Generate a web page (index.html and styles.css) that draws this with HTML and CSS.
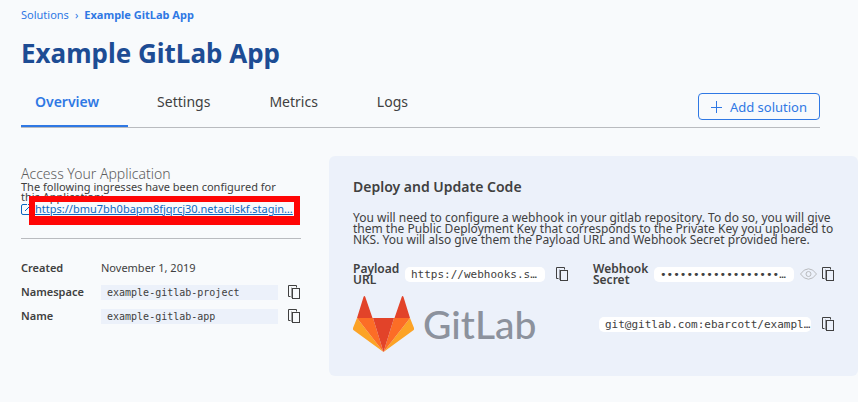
FILE: index.html
```html
<!DOCTYPE html>
<html lang="en">
<head>
<meta charset="utf-8">
<title>Example GitLab App</title>
<link rel="stylesheet" href="styles.css">
</head>
<body>
<svg class="defs" aria-hidden="true">
  <symbol id="copy" viewBox="0 0 12 14">
    <path d="M2.500 11.500H.5V.5h8v2" fill="none" stroke="currentColor"/>
    <path d="M3.500 2.500v10.500" stroke="currentColor" opacity=".5"/>
    <rect x="4.500" y="3.500" width="7" height="10" fill="none" stroke="currentColor"/>
  </symbol>
</svg>
<header class="top">
  <nav class="crumbs" aria-label="Breadcrumb"><a href="#">Solutions</a><span>›</span><a href="#" class="here">Example GitLab App</a></nav>
  <h1>Example GitLab App</h1>
  <div class="bar">
    <nav class="tabs" aria-label="Sections">
      <a href="#" class="active">Overview</a><a href="#">Settings</a><a href="#">Metrics</a><a href="#">Logs</a>
    </nav>
    <button class="add" type="button"><svg width="11" height="12" viewBox="0 0 11 12"><path d="M5.500 0v12M0 6.500h11" stroke="currentColor"/></svg>Add solution</button>
  </div>
</header>
<main class="content">
  <section class="access">
    <div class="ingress">
      <h2>Access Your Application</h2>
      <p>The following ingresses have been configured for this Application:</p>
      <div class="link-row">
        <svg width="12" height="12" viewBox="0 0 12 12" fill="none" stroke="currentColor"><path d="M6 1.500H2Q.5 1.500.5 3v7q0 1.500 1.500 1.500h7M4 8l6-6M7 1.500h4"/></svg>
        <a href="#">https://bmu7bh0bapm8fjqrcj30.netacilskf.stagin…</a>
        <div class="marker"></div>
      </div>
    </div>
    <dl class="facts">
      <dt>Created</dt><dd>November 1, 2019</dd>
      <dt>Namespace</dt><dd><code>example-gitlab-project</code><button type="button" aria-label="Copy namespace"><svg class="copy"><use href="#copy"/></svg></button></dd>
      <dt>Name</dt><dd><code>example-gitlab-app</code><button type="button" aria-label="Copy name"><svg class="copy"><use href="#copy"/></svg></button></dd>
    </dl>
  </section>
  <section class="deploy">
    <h2>Deploy and Update Code</h2>
    <p>You will need to configure a webhook in your gitlab repository. To do so, you will give them the Public Deployment Key that corresponds to the Private Key you uploaded to NKS. You will also give them the Payload URL and Webhook Secret provided here.</p>
    <div class="hooks">
      <div class="hook">
        <strong>Payload URL</strong><code>https://webhooks.s…</code>
        <button type="button" class="lone" aria-label="Copy payload URL"><svg class="copy"><use href="#copy"/></svg></button>
      </div>
      <div class="hook">
        <strong>Webhook Secret</strong><code>••••••••••••••••••…</code>
        <button type="button" class="eye" aria-label="Show secret"><svg width="17" height="12" viewBox="0 0 17 12" fill="none" stroke="currentColor"><path d="M.5 6Q4 .8 8.500.8T16.500 6Q13 11.200 8.500 11.200T.5 6Z"/><circle cx="8.500" cy="6" r="2.500"/></svg></button>
        <button type="button" aria-label="Copy webhook secret"><svg class="copy"><use href="#copy"/></svg></button>
      </div>
    </div>
    <div class="repo">
      <div class="brand">
        <svg width="61" height="56" viewBox="0 0 61 56">
          <path fill="#fca326" d="M4 22 0 32q-.5 1.500 1 2.500L30.500 56zM57 22l4 10q.5 1.500-1 2.500L30.500 56z"/>
          <path fill="#fc6d26" d="M4 22h16l10.500 34zM57 22H41L30.500 56z"/>
          <path fill="#e24329" d="M20 22h21L30.500 56zM4 22 10.500 1q.9-2 1.800 0L19.500 22zM57 22 50.500 1q-.9-2-1.800 0L41.500 22z"/>
        </svg>
        <span>GitLab</span>
      </div>
      <div class="clone">
        <code>git@gitlab.com:ebarcott/exampl…</code>
        <button type="button" aria-label="Copy repository address"><svg class="copy"><use href="#copy"/></svg></button>
      </div>
    </div>
  </section>
</main>
</body>
</html>
```
FILE: styles.css
```css
* { box-sizing: border-box; }
body {
  margin: 0;
  background: #f8fafc;
  color: #404040;
  font: 11px/16px "Noto Sans", sans-serif;
}
h1, h2, p, dl, dd { margin: 0; }
button { padding: 0; border: 0; background: none; color: inherit; font: inherit; }
svg { display: block; flex: none; }
.defs { position: absolute; width: 0; height: 0; }
.copy { width: 12px; height: 14px; }
code { font: 10px/15px "DejaVu Sans Mono", monospace; white-space: nowrap; overflow: hidden; }

.top { padding: 7px 38px 0 21px; }
.crumbs { display: flex; gap: 6px; color: #2f78e4; }
.crumbs a { color: inherit; text-decoration: none; }
.crumbs .here { font-weight: 700; }
h1 { margin-top: 12px; color: #1d4c94; font-size: 26px; line-height: 36px; font-weight: 700; }
.bar { display: flex; justify-content: space-between; align-items: flex-start; margin-top: 14px; border-bottom: 1px solid #b9bbbf; }
.tabs { display: flex; gap: 30px; }
.tabs a { height: 42px; padding: 7px 15px 0 14px; color: #404040; font-size: 14px; line-height: 20px; text-decoration: none; }
.tabs .active { margin-right: -15px; padding-right: 29px; border-bottom: 2px solid #2f78e4; color: #2f78e4; font-weight: 600; }
.add { display: flex; align-items: center; gap: 8px; height: 27px; margin-top: 8px; padding: 0 12px; border: 1px solid #2f78e4; border-radius: 4px; color: #2f78e4; font-size: 13px; }

.content { display: grid; grid-template-columns: 280px 1fr; gap: 28px; align-items: start; padding: 28px 0 26px 21px; }
.access { padding-top: 9px; }
.ingress { padding-bottom: 22px; border-bottom: 1px solid #b9bbbf; }
.access h2 { color: #5c5c5c; font-size: 14px; line-height: 17px; font-weight: 300; }
.ingress p { padding-right: 15px; line-height: 10px; }
.link-row { position: relative; display: flex; gap: 2px; align-items: center; color: #0c66c0; line-height: 14px; }
.link-row a { color: inherit; white-space: nowrap; }
.marker { position: absolute; inset: -6px 1px -9px 8px; border: 6px solid #ff0505; border-bottom-width: 9px; pointer-events: none; }
.facts { display: grid; grid-template-columns: 80px 1fr; row-gap: 8px; padding-top: 21px; }
.facts dt { font-weight: 600; }
.facts dd { display: flex; align-items: center; gap: 10px; padding-right: 1px; }
.facts code { flex: 1; padding: 0 6px; background: #ecf1fa; }

.deploy { padding: 21px 24px 24px; border-radius: 6px; background: #ecf1fa; }
.deploy h2 { font-size: 14px; line-height: 20px; font-weight: 600; }
.deploy p { margin-top: 15px; font-size: 12px; line-height: 11px; }
.hooks { display: grid; grid-template-columns: 1fr 1fr; margin-top: 18px; }
.hook { display: flex; align-items: center; }
.hook strong { width: 52px; font-size: 12px; line-height: 11px; font-weight: 600; }
.hook + .hook strong { width: 61px; }
.deploy code { padding: 0 0 0 6px; border-radius: 5px; background: #fff; font-size: 11px; }
.hook code { width: 140px; }
.hook .lone { margin-left: 11px; }
.eye { margin: 0 5px 0 6px; color: #b8babd; }
.repo { display: flex; justify-content: space-between; align-items: center; margin-top: 11px; }
.brand { display: flex; align-items: center; gap: 9px; color: #8c929d; font: 500 39px/54px Lato, sans-serif; }
.clone { display: flex; align-items: center; gap: 11px; }
.clone code { width: 212px; }
```
